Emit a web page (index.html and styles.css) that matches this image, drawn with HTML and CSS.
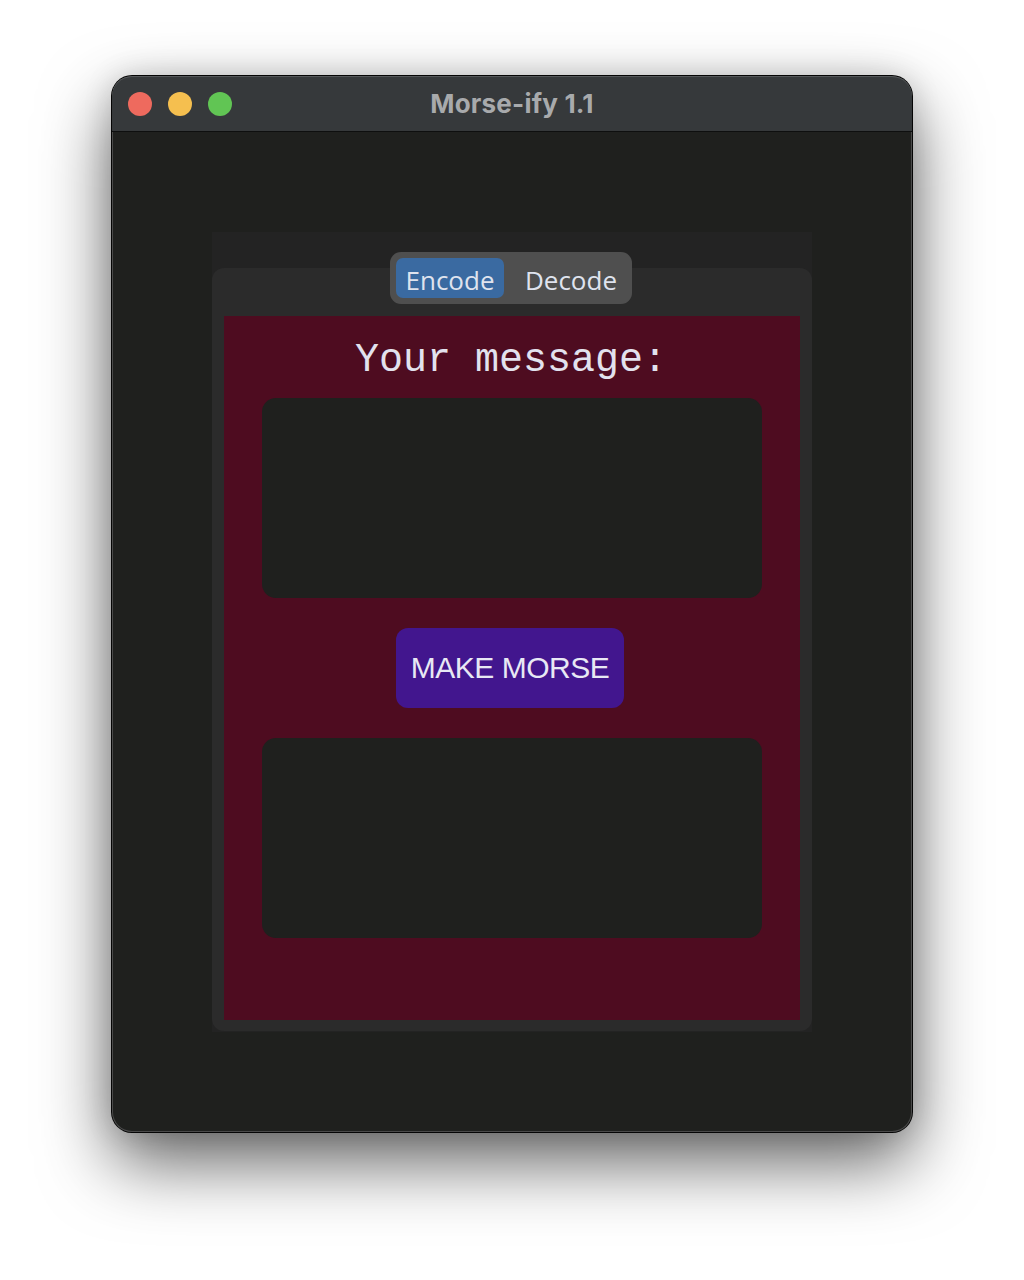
FILE: index.html
```html
<!DOCTYPE html>
<html>
<head>
<meta charset="utf-8">
<title>Morse-ify 1.1</title>
<link rel="stylesheet" href="styles.css">
</head>
<body>
<div class="window">
  <div class="titlebar">
    <div class="lights">
      <span class="light red"></span>
      <span class="light yellow"></span>
      <span class="light green"></span>
    </div>
    <div class="title">Morse-ify 1.1</div>
  </div>
  <div class="content">
    <div class="panel">
      <div class="tabbox">
        <div class="segmented">
          <span class="seg active">Encode</span>
          <span class="seg second">Decode</span>
        </div>
        <div class="maroon">
          <div class="heading">Your message:</div>
          <div class="textbox"></div>
          <div class="button">MAKE MORSE</div>
          <div class="textbox"></div>
        </div>
      </div>
    </div>
  </div>
</div>
</body>
</html>
```
FILE: styles.css
```css
html, body {
  margin: 0;
  padding: 0;
  background: #ffffff;
}
body {
  padding-top: 76px;
  height: 1280px;
  box-sizing: border-box;
}
.window {
  width: 800px;
  height: 1056px;
  margin: 0 auto;
  border-radius: 20px;
  background: #1f201e;
  box-shadow: 0 0 0 1px #050505, inset 0 0 0 1px #4a4a4a, 0 30px 70px rgba(0,0,0,0.62), 0 0 30px rgba(0,0,0,0.14);
  overflow: hidden;
  display: flex;
  flex-direction: column;
}
.titlebar {
  height: 55px;
  flex: none;
  background: #36393b;
  border-bottom: 1px solid #0e0f0f;
  display: flex;
  align-items: center;
  position: relative;
  border-radius: 20px 20px 0 0;
  box-shadow: inset 0 1px 0 #55585a;
}
.lights {
  display: flex;
  gap: 16px;
  padding-left: 16px;
  padding-top: 1px;
}
.light {
  width: 24px;
  height: 24px;
  border-radius: 50%;
  display: block;
}
.red { background: #ee6a5e; }
.yellow { background: #f5bf4f; }
.green { background: #61c554; }
.title {
  position: absolute;
  left: 0;
  right: 0;
  top: 0;
  line-height: 55px;
  text-align: center;
  font-family: "Inter", "Liberation Sans", sans-serif;
  font-weight: 700;
  font-size: 26px;
  color: #a8aaac;
  letter-spacing: 0.2px;
}
.content {
  flex: 1;
  display: flex;
  justify-content: center;
  padding-top: 100px;
}
.panel {
  width: 600px;
  height: 800px;
  background: #232323;
  padding-top: 36px;
  box-sizing: border-box;
}
.tabbox {
  height: 763px;
  background: #2b2b2b;
  border-radius: 12px;
  padding: 0 12px 11px;
  box-sizing: border-box;
  display: flex;
  flex-direction: column;
  align-items: center;
}
.segmented {
  margin-top: -16px;
  height: 52px;
  box-sizing: border-box;
  padding: 6px;
  background: #4f4f4f;
  border-radius: 11px;
  display: flex;
  align-items: stretch;
  margin-left: -2px;
}
.seg {
  font-family: "Open Sans", "Noto Sans", sans-serif;
  font-size: 26px;
  color: #dfe3ee;
  padding: 3px 0 0;
  display: flex;
  align-items: center;
  border-radius: 7px;
  width: 108px;
  box-sizing: border-box;
  justify-content: center;
}
.seg.active {
  background: #3a6aa1;
}
.seg.second {
  margin-left: 12px;
  width: 110px;
}
.maroon {
  margin-top: 12px;
  align-self: stretch;
  flex: 1;
  background: #4e0c20;
  display: flex;
  flex-direction: column;
  align-items: center;
  padding-top: 23px;
}
.heading {
  font-family: "Liberation Mono", "Courier New", monospace;
  font-size: 40px;
  line-height: 44px;
  color: #e2e2ee;
  margin-bottom: 15px;
  margin-left: -2px;
}
.textbox {
  width: 500px;
  height: 200px;
  background: #1f201e;
  border-radius: 14px;
}
.button {
  margin: 30px 0;
  width: 228px;
  height: 80px;
  border-radius: 12px;
  background: #42168e;
  color: #e8e8f4;
  font-family: "Liberation Sans", Arial, sans-serif;
  font-size: 30px;
  display: flex;
  align-items: center;
  justify-content: center;
  letter-spacing: -0.5px;
  margin-left: -4px;
}
```
